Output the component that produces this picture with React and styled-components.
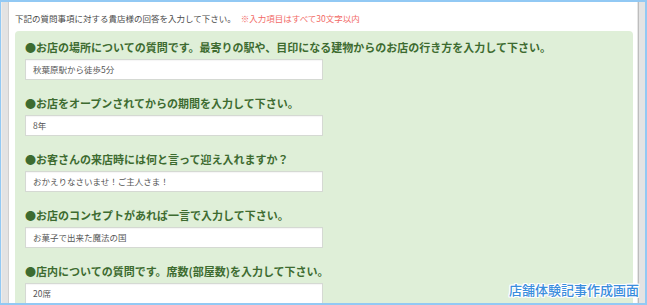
import React from "react";
import styled, { createGlobalStyle } from "styled-components";

const Global = createGlobalStyle`
  html, body { margin: 0; padding: 0; background: #fff; }
  body { width: 647px; height: 305px; overflow: hidden; font-family: "Noto Sans CJK JP", "Noto Sans", sans-serif; }
`;

const Frame = styled.div`
  position: relative;
  box-sizing: border-box;
  width: 647px;
  height: 305px;
  border: 2px solid #92c9f4;
  border-left-width: 1px;
  display: flex;
  overflow: hidden;
`;

const LeftRail = styled.div`
  width: 6px;
  flex: none;
  background: #e3e3e3;
  border-left: 1px solid #ececec;
  border-right: 1px solid #cfcfcf;
`;

const Scrollbar = styled.div`
  width: 8px;
  flex: none;
  background: linear-gradient(to right, #e6e6e6 0 1px, #bdbdbd 1px 2px, #e3e3e3 2px);
`;

const Content = styled.div`
  flex: 1;
  min-width: 0;
  padding: 10px 4px 0 6px;
`;

const Intro = styled.p`
  margin: 0 0 7px;
  font-size: 8.5px;
  line-height: 12px;
  color: #4a4a4a;
  white-space: nowrap;
`;

const Note = styled.span`
  margin-left: 5px;
  color: #f26a66;
`;

const Panel = styled.div`
  background: #dfefd8;
  border-radius: 4px 4px 0 0;
  padding: 8px 10px 20px;
  display: flex;
  flex-direction: column;
  gap: 15.6px;
`;

const Field = styled.div`
  display: flex;
  flex-direction: column;
  gap: 3.5px;
`;

const Question = styled.div`
  font-size: 11px;
  line-height: 16px;
  font-weight: 700;
  color: #3d6b30;
  white-space: nowrap;
`;

const Answer = styled.div`
  box-sizing: border-box;
  width: 298px;
  height: 21px;
  background: #fff;
  border: 1px solid #d5d9d3;
  box-shadow: inset 0 1px 1px rgba(0,0,0,0.04);
  padding: 0 0 0 7px;
  display: flex;
  align-items: center;
  font-size: 8.5px;
  color: #555;
`;

const Caption = styled.div`
  position: absolute;
  right: 6px;
  bottom: 5px;
  font-size: 13px;
  line-height: 16px;
  font-weight: 500;
  color: #3a8ddd;
  text-shadow: -1px -1px 0 #fff, 1px -1px 0 #fff, -1px 1px 0 #fff, 1px 1px 0 #fff, 0 1px 0 #fff, 0 -1px 0 #fff, 1px 0 0 #fff, -1px 0 0 #fff;
`;

const items = [
  ["●お店の場所についての質問です。最寄りの駅や、目印になる建物からのお店の行き方を入力して下さい。", "秋葉原駅から徒歩5分"],
  ["●お店をオープンされてからの期間を入力して下さい。", "8年"],
  ["●お客さんの来店時には何と言って迎え入れますか？", "おかえりなさいませ！ご主人さま！"],
  ["●お店のコンセプトがあれば一言で入力して下さい。", "お菓子で出来た魔法の国"],
  ["●店内についての質問です。席数(部屋数)を入力して下さい。", "20席"],
];

export default function App() {
  return (
    <>
      <Global />
      <Frame>
        <LeftRail />
        <Content>
          <Intro>
            下記の質問事項に対する貴店様の回答を入力して下さい。
            <Note>※入力項目はすべて30文字以内</Note>
          </Intro>
          <Panel>
            {items.map(([q, a]) => (
              <Field key={q}>
                <Question>{q}</Question>
                <Answer>{a}</Answer>
              </Field>
            ))}
          </Panel>
        </Content>
        <Scrollbar />
        <Caption>店舗体験記事作成画面</Caption>
      </Frame>
    </>
  );
}
